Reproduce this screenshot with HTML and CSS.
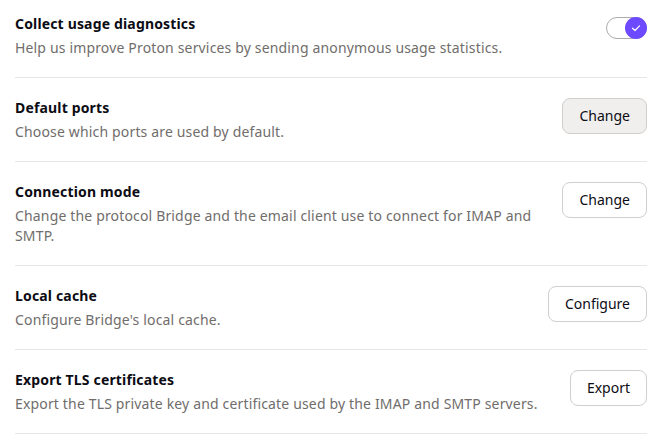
FILE: index.html
```html
<!DOCTYPE html>
<html lang="en">
<head>
    <meta charset="UTF-8">
    <meta name="viewport" content="width=device-width, initial-scale=1.0">
    <title>Advanced settings</title>
    <link rel="stylesheet" href="styles.css">
</head>
<body>
  <div class="settings">
    <div class="setting-row first">
        <div class="setting-text">
            <div class="setting-title">Collect usage diagnostics</div>
            <div class="setting-desc">Help us improve Proton services by sending anonymous usage statistics.</div>
        </div>
        <div class="toggle on">
            <div class="toggle-knob">
                <svg width="12" height="12" viewBox="0 0 12 12"><path d="M2.5 6.2 L5 8.5 L9.5 3.8" fill="none" stroke="#ffffff" stroke-width="1.2" stroke-linecap="round" stroke-linejoin="round"/></svg>
            </div>
        </div>
    </div>
    <div class="setting-row">
        <div class="setting-text">
            <div class="setting-title">Default ports</div>
            <div class="setting-desc">Choose which ports are used by default.</div>
        </div>
        <button class="btn hover">Change</button>
    </div>
    <div class="setting-row">
        <div class="setting-text">
            <div class="setting-title">Connection mode</div>
            <div class="setting-desc">Change the protocol Bridge and the email client use to connect for IMAP and SMTP.</div>
        </div>
        <button class="btn">Change</button>
    </div>
    <div class="setting-row">
        <div class="setting-text">
            <div class="setting-title">Local cache</div>
            <div class="setting-desc">Configure Bridge's local cache.</div>
        </div>
        <button class="btn">Configure</button>
    </div>
    <div class="setting-row">
        <div class="setting-text">
            <div class="setting-title">Export TLS certificates</div>
            <div class="setting-desc">Export the TLS private key and certificate used by the IMAP and SMTP servers.</div>
        </div>
        <button class="btn">Export</button>
    </div>
  </div>
</body>
</html>
```

FILE: styles.css
```css
body {
    margin: 0;
    background: #ffffff;
    font-family: "Noto Sans", "Open Sans", sans-serif;
}

.settings {
    width: 632px;
    margin-left: 15px;
}

.setting-row {
    display: flex;
    justify-content: space-between;
    align-items: flex-start;
    gap: 20px;
    padding: 20px 0 19px;
    border-bottom: 1px solid #e6e6e6;
}

.setting-row.first {
    padding-top: 14px;
}

.setting-text {
    display: flex;
    flex-direction: column;
    gap: 4px;
    max-width: 540px;
}

.setting-title {
    font-size: 14px;
    font-weight: 700;
    line-height: 20px;
    letter-spacing: 0.16px;
    color: #0c0c14;
}

.setting-desc {
    font-size: 14px;
    line-height: 20px;
    letter-spacing: 0.16px;
    color: #706d6b;
}

.btn {
    flex-shrink: 0;
    height: 36px;
    padding: 0 16px 1px;
    font-family: inherit;
    font-size: 14px;
    color: #0c0c14;
    background: #ffffff;
    border: 1px solid #d1cfcd;
    border-radius: 8px;
}

.btn.hover {
    background: #f0efed;
}

.toggle {
    flex-shrink: 0;
    width: 39px;
    height: 20px;
    margin-top: 3px;
    border: 1px solid #adabab;
    border-radius: 11px;
    background: #ffffff;
    display: flex;
    justify-content: flex-end;
    align-items: center;
}

.toggle-knob {
    width: 22px;
    height: 22px;
    margin-right: -1px;
    border-radius: 50%;
    background: #6d4aff;
    display: flex;
    justify-content: center;
    align-items: center;
}
```
